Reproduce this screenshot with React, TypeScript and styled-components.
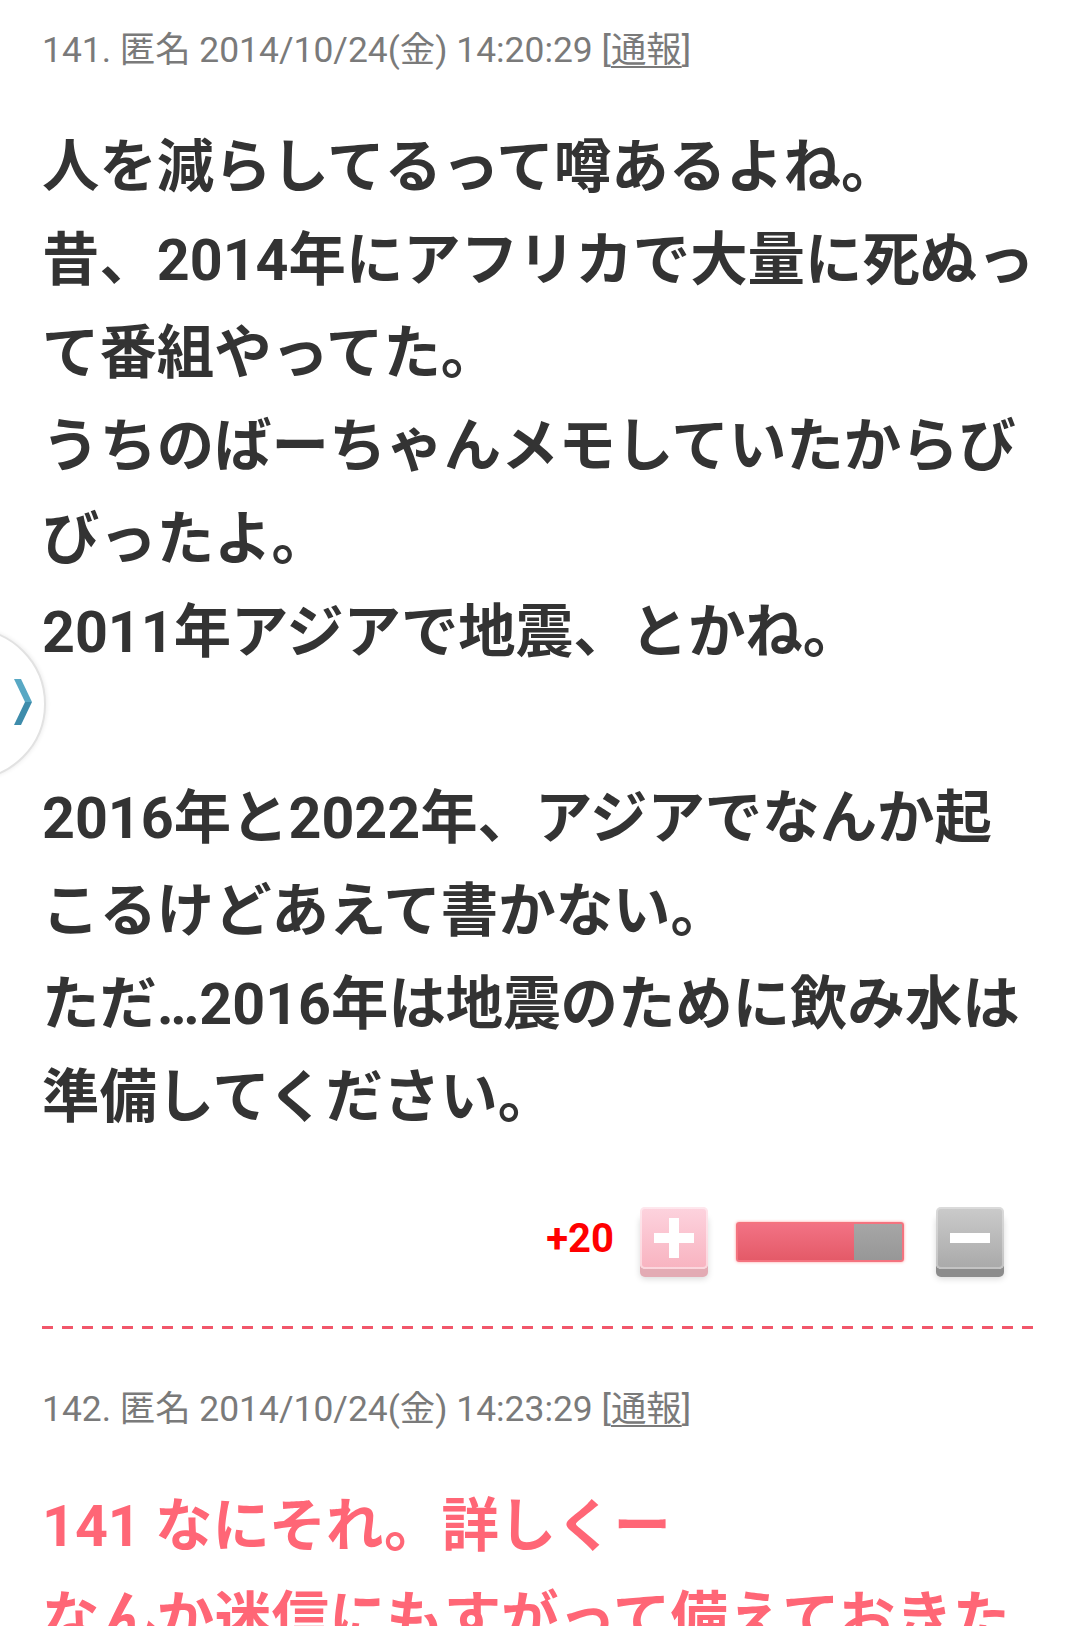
import React from "react";
import styled, { createGlobalStyle } from "styled-components";

const GlobalStyle = createGlobalStyle`
  html, body {
    margin: 0;
    padding: 0;
    background: #ffffff;
  }
  body {
    width: 1080px;
    height: 1626px;
    overflow: hidden;
    font-family: "Roboto", "Noto Sans CJK JP", sans-serif;
  }
`;

interface Comment {
  no: number;
  date: string;
  lines: string[];
  tone?: "normal" | "reply";
  votes?: number;
  ratio?: number;
}

const comments: Comment[] = [
  {
    no: 141,
    date: "2014/10/24(金) 14:20:29",
    lines: [
      "人を減らしてるって噂あるよね。",
      "昔、2014年にアフリカで大量に死ぬっ",
      "て番組やってた。",
      "うちのばーちゃんメモしていたからび",
      "びったよ。",
      "2011年アジアで地震、とかね。",
      "",
      "2016年と2022年、アジアでなんか起",
      "こるけどあえて書かない。",
      "ただ…2016年は地震のために飲み水は",
      "準備してください。",
    ],
    votes: 20,
    ratio: 0.71,
  },
  {
    no: 142,
    date: "2014/10/24(金) 14:23:29",
    tone: "reply",
    lines: ["141 なにそれ。詳しくー", "なんか迷信にもすがって備えておきた"],
  },
];

export default function App() {
  return (
    <>
      <GlobalStyle />
      <Page>
        {comments.map((c, i) => (
          <React.Fragment key={c.no}>
            <Post>
              <Meta>
                {c.no}. 匿名 {c.date} [<Report>通報</Report>]
              </Meta>
              <Body tone={c.tone || "normal"}>
                {c.lines.map((l, j) => (
                  <Line key={j}>{l || "\u00a0"}</Line>
                ))}
              </Body>
              {c.votes !== undefined && (
                <VoteRow>
                  <Score>+{c.votes}</Score>
                  <VoteButton kind="plus" aria-label="plus">
                    <Sign kind="plus" />
                  </VoteButton>
                  <Meter>
                    <MeterFill style={{ width: `${(c.ratio || 0) * 100}%` }} />
                  </Meter>
                  <VoteButton kind="minus" aria-label="minus">
                    <Sign kind="minus" />
                  </VoteButton>
                </VoteRow>
              )}
            </Post>
            {i < comments.length - 1 && <Divider />}
          </React.Fragment>
        ))}
        <SideTab>
          <svg width="20" height="46" viewBox="0 0 20 46">
            <polygon points="0,0 7,0 18,23 11,23" fill="#58a8c4" />
            <polygon points="11,23 18,23 7,46 0,46" fill="#3e8cab" />
          </svg>
        </SideTab>
      </Page>
    </>
  );
}

const Page = styled.div`
  position: relative;
  width: 1080px;
`;

const Post = styled.div`
  padding: 25px 0 0 42px;
`;

const Meta = styled.div`
  font-size: 35.4px;
  line-height: 50px;
  color: #7a7a7a;
  white-space: nowrap;
`;

const Report = styled.span`
  text-decoration: underline;
  text-underline-offset: 4px;
  text-decoration-thickness: 2px;
`;

const Body = styled.div<{ tone: "normal" | "reply" }>`
  margin-top: 46px;
  font-size: 57.4px;
  line-height: 93px;
  font-weight: 700;
  color: ${(p) => (p.tone === "reply" ? "#ff6676" : "#333333")};
`;

const Line = styled.div`
  white-space: nowrap;
`;

const VoteRow = styled.div`
  display: flex;
  align-items: center;
  justify-content: flex-end;
  margin-top: 62px;
  padding-right: 76px;
  height: 72px;
`;

const Score = styled.span`
  font-size: 40px;
  font-weight: 700;
  color: #ff0000;
  margin-right: 26px;
  margin-bottom: 8px;
`;

const VoteButton = styled.div<{ kind: "plus" | "minus" }>`
  position: relative;
  width: 68px;
  height: 62px;
  border-radius: 5px;
  display: flex;
  align-items: center;
  justify-content: center;
  margin-bottom: 8px;
  background: ${(p) =>
    p.kind === "plus"
      ? "linear-gradient(#fdd3de, #f8b3c0)"
      : "linear-gradient(#cbcbcb, #a9a9a9)"};
  box-shadow: inset 0 0 0 2px
      ${(p) => (p.kind === "plus" ? "rgba(255,255,255,0.45)" : "rgba(255,255,255,0.3)")},
    0 8px 0 ${(p) => (p.kind === "plus" ? "#e3abb4" : "#8c8c8c")},
    0 10px 6px rgba(0, 0, 0, 0.15);
`;

const Sign = styled.span<{ kind: "plus" | "minus" }>`
  position: relative;
  width: 40px;
  height: 10px;
  background: #ffffff;
  &::after {
    content: "";
    display: ${(p) => (p.kind === "plus" ? "block" : "none")};
    position: absolute;
    left: 15px;
    top: -15px;
    width: 10px;
    height: 40px;
    background: #ffffff;
  }
`;

const Meter = styled.div`
  width: 164px;
  height: 36px;
  margin: 0 32px 0 28px;
  background: linear-gradient(#a6a6a6, #979797);
  border: 2px solid #f4737f;
  border-radius: 3px;
  box-shadow: 0 0 3px rgba(255, 60, 60, 0.5);
  overflow: hidden;
`;

const MeterFill = styled.div`
  height: 100%;
  background: linear-gradient(#f27284, #e45a68);
`;

const Divider = styled.div`
  margin: 48px 42px 30px 42px;
  height: 3px;
  background: repeating-linear-gradient(
    to right,
    #f2566a 0 11px,
    transparent 11px 20px
  );
`;

const SideTab = styled.div`
  position: absolute;
  left: -106px;
  top: 628px;
  width: 148px;
  height: 148px;
  border-radius: 50%;
  background: #ffffff;
  border: 2px solid #e2e2e2;
  box-shadow: 1px 0 4px rgba(0, 0, 0, 0.08);
  svg {
    position: absolute;
    left: 118px;
    top: 49px;
  }
`;
